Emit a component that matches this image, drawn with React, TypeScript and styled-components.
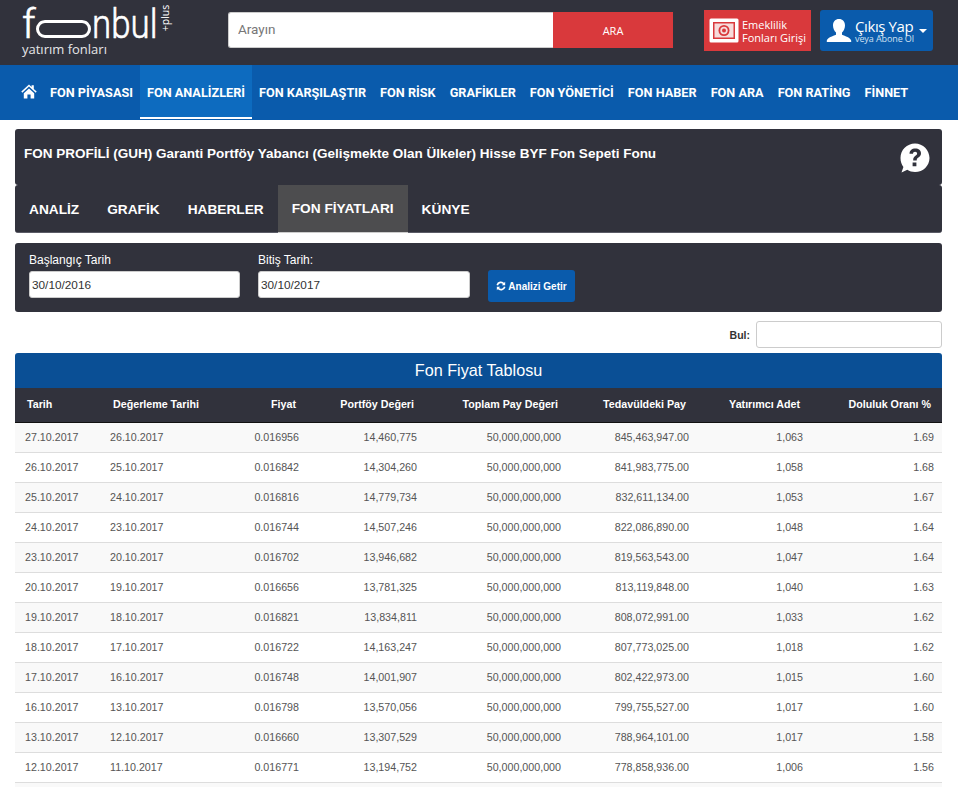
import React from 'react';
import styled, { createGlobalStyle } from 'styled-components';

const GlobalStyle = createGlobalStyle`
  html, body {
    margin: 0;
    padding: 0;
    overflow: hidden;
    height: 787px;
    background: #fff;
    font-family: "Liberation Sans", Arial, sans-serif;
    font-size: 14px;
    color: #333;
  }
  * { box-sizing: border-box; }
`;

const Header = styled.header`
  height: 65px;
  background: #31323c;
  display: flex;
  align-items: flex-start;
  padding-left: 22px;
`;

const Logo = styled.a`
  width: 206px;
  height: 65px;
  flex: none;
  position: relative;
  color: #fff;
  display: block;
`;

const LogoWord = styled.div`
  display: flex;
  align-items: baseline;
  margin-top: 6px;
  font-family: Roboto, Lato, sans-serif;
  font-weight: 300;
  font-size: 41px;
  line-height: 36px;
  -webkit-text-stroke: 0.6px #fff;
`;

const LogoPill = styled.span`
  display: block;
  flex: none;
  width: 55px;
  height: 18px;
  border: 3px solid #fff;
  border-radius: 9px;
  margin-left: 0;
`;

const LogoLetters = styled.span`
  display: inline-block;
  margin-left: 1px;
  transform: scaleX(0.85);
  transform-origin: left;
`;

const LogoSub = styled.div`
  font-family: "Open Sans", sans-serif;
  font-size: 13px;
  line-height: 14px;
  color: #e6e6e8;
`;

const LogoPlus = styled.span`
  position: absolute;
  left: 130px;
  top: 12px;
  font-family: "Open Sans", sans-serif;
  font-size: 10.5px;
  line-height: 12px;
  transform: rotate(-90deg);
`;

const SearchForm = styled.form`
  display: flex;
  width: 445px;
  height: 36px;
  margin-top: 12px;
`;

const SearchInput = styled.input`
  flex: 1;
  min-width: 0;
  border: 1px solid #ccc;
  border-right: 0;
  border-radius: 3px 0 0 3px;
  background: #fff;
  padding: 0 9px 2px;
  font-family: Roboto, sans-serif;
  font-size: 13.5px;
  &::placeholder { color: #777; opacity: 1; }
`;

const SearchButton = styled.button`
  width: 120px;
  border: 0;
  background: #d9393c;
  color: #fff;
  font-family: "Open Sans", sans-serif;
  font-size: 11px;
  font-weight: 500;
`;

const PensionLink = styled.a`
  width: 107px;
  height: 41px;
  margin: 10px 0 0 31px;
  background: #d9393c;
  color: #fff;
  display: flex;
  align-items: center;
  gap: 3px;
  padding-left: 5px;
  font-family: "Open Sans", sans-serif;
  font-size: 11px;
  font-weight: 400;
  line-height: 13px;
`;

const UserButton = styled.a`
  width: 113px;
  height: 41px;
  margin: 10px 0 0 9px;
  background: #0a5bac;
  border-radius: 3px;
  color: #fff;
  display: flex;
  align-items: center;
  padding-left: 6px;
  font-family: "Open Sans", sans-serif;
`;

const UserText = styled.div`
  margin-left: 3px;
  font-size: 15px;
  line-height: 16px;
  letter-spacing: -0.4px;
  white-space: nowrap;
  small {
    display: block;
    font-size: 9px;
    line-height: 10px;
    color: #cfe0f2;
    letter-spacing: -0.1px;
  }
`;

const Caret = styled.span`
  margin-left: 5px;
  width: 0;
  height: 0;
  border-left: 4px solid transparent;
  border-right: 4px solid transparent;
  border-top: 4px solid #fff;
`;

const Nav = styled.nav`
  height: 55px;
  background: #0a5bac;
  display: flex;
  padding-left: 21px;
`;

const HomeLink = styled.a`
  width: 22px;
  display: flex;
  align-items: center;
  padding-bottom: 2px;
`;

const NavItem = styled.a<{ $active?: boolean }>`
  display: flex;
  align-items: center;
  padding: 0 7px;
  height: 54px;
  color: #fff;
  font-family: Roboto, "Open Sans", sans-serif;
  font-size: 12.7px;
  font-weight: 700;
  white-space: nowrap;
  background: ${(p) => (p.$active ? '#0d6bbf' : 'transparent')};
  border-bottom: ${(p) => (p.$active ? '2px solid #fff' : '0')};
  padding-top: ${(p) => (p.$active ? '2px' : '0')};
`;

const Content = styled.main`
  padding: 9px 16px 0 15px;
`;

const ProfilePanel = styled.section`
  height: 104px;
  margin-bottom: 10px;
`;

const ProfileHead = styled.div`
  height: 56px;
  background: #31323c;
  border-radius: 3px;
  display: flex;
  justify-content: space-between;
  padding: 13px 11px 0 9px;
`;

const ProfileTitle = styled.h1`
  margin: 3px 0 0;
  color: #fff;
  font-size: 13.5px;
  line-height: 17px;
  font-weight: 700;
`;

const Tabs = styled.div`
  height: 48px;
  display: flex;
  background: #31323c;
  border-radius: 3px;
  border-bottom: 1px solid #5a5b66;
`;

const Tab = styled.a<{ $active?: boolean }>`
  display: flex;
  align-items: center;
  height: 48px;
  padding: 0 14px;
  color: #fff;
  font-size: 13.7px;
  font-weight: 700;
  background: ${(p) => (p.$active ? '#4d4d4f' : 'transparent')};
  border-bottom: ${(p) => (p.$active ? '1px solid #ccc' : '0')};
`;

const FilterPanel = styled.section`
  background: #31323c;
  border-radius: 3px;
  height: 69px;
  margin-bottom: 9px;
  display: flex;
  padding: 10px 14px 0;
`;

const Field = styled.div<{ $width: number }>`
  width: ${(p) => p.$width}px;
  margin-right: 18px;
`;

const FieldLabel = styled.label`
  display: block;
  color: #fff;
  font-size: 12px;
  line-height: 15px;
  margin-bottom: 3px;
`;

const DateInput = styled.input`
  display: block;
  width: 100%;
  height: 27px;
  border: 1px solid #ccc;
  border-radius: 3px;
  padding: 0 2px;
  font-family: "Liberation Sans", Arial, sans-serif;
  font-size: 11.8px;
  color: #333;
  background: #fff;
`;

const FetchButton = styled.button`
  align-self: flex-start;
  margin-top: 17px;
  height: 32px;
  width: 87px;
  border: 0;
  border-radius: 3px;
  background: #0a5bac;
  color: #fff;
  font-family: "Liberation Sans", Arial, sans-serif;
  font-size: 10px;
  font-weight: 700;
  display: flex;
  align-items: center;
  justify-content: center;
  gap: 2px;
`;

const FindRow = styled.div`
  display: flex;
  justify-content: flex-end;
  align-items: center;
  gap: 6px;
  height: 27px;
  margin-bottom: 5px;
`;

const FindLabel = styled.label`
  font-size: 10.5px;
  font-weight: 700;
  color: #333;
`;

const FindInput = styled.input`
  width: 186px;
  height: 27px;
  border: 1px solid #ccc;
  border-radius: 3px;
  background: #fff;
`;

const TableTitle = styled.h2`
  margin: 0;
  height: 35px;
  background: #0a4f95;
  border-radius: 3px 3px 0 0;
  color: #fff;
  font-size: 16.2px;
  font-weight: 400;
  line-height: 35px;
  text-align: center;
`;

const PriceTable = styled.table`
  width: 927px;
  table-layout: fixed;
  border-collapse: collapse;
`;

const HeadCell = styled.th<{ $align?: 'left' | 'right'; $inset?: number }>`
  height: 34px;
  background: #31323c;
  color: #fff;
  font-weight: 700;
  font-size: 10.7px;
  text-align: ${(p) => p.$align || 'right'};
  padding: 0 11px 2px ${(p) => p.$inset || 0}px;
  border-bottom: 1px solid #111;
  white-space: nowrap;
`;

const Row = styled.tr`
  height: 30px;
  background: #f9f9f9;
  &:nth-child(even) { background: #fff; }
  border-bottom: 1px solid #ddd;
`;

const Cell = styled.td<{ $align?: 'left' | 'right' }>`
  color: #555;
  font-size: 10.7px;
  text-align: ${(p) => p.$align || 'right'};
  padding: 0 8px 0 ${(p) => (p.$align === 'left' ? '10px' : '0')};
  white-space: nowrap;
`;

const HomeIcon = () => (
  <svg width="16" height="15" viewBox="0 0 16 15" fill="#fff">
    <path d="M8 0.5 0.3 7.6l1 1.1L8 2.6l6.7 6.1 1-1.1L12.8 5V1.2h-2.2v1.8z" />
    <path d="M2.8 9.2 8 4.4l5.2 4.8V14.5H9.6v-4H6.4v4H2.8z" />
  </svg>
);

const HelpIcon = () => (
  <svg width="32" height="32" viewBox="0 0 32 32">
    <path
      fill="#fff"
      d="M16 1.500C7.900 1.500 1.500 7.900 1.500 16c0 3.400 1 6.400 2.900 8.900L2.500 30.500l5.800-2.700c2.200 1.400 4.900 2.200 7.700 2.200 8.100 0 14.500-6.200 14.500-14S24.100 1.500 16 1.500z"
    />
    <path
      fill="#31323c"
      d="M10.500 11.800c0-3.400 2.400-5.400 5.800-5.400 3.300 0 5.700 1.900 5.700 4.800 0 2.200-1.100 3.300-2.600 4.400-1.200.9-1.700 1.400-1.700 2.800h-3.500c-.1-2.300.6-3.400 2.200-4.600 1.100-.8 1.700-1.300 1.700-2.300 0-1.100-.8-1.800-2-1.800-1.300 0-2.100.9-2.100 2.100zM13.600 20.500h3.800v3.700h-3.800z"
    />
  </svg>
);

const SafeIcon = () => (
  <svg width="30" height="25" viewBox="0 0 30 25" fill="none" style={{ flex: 'none' }}>
    <rect x="0.500" y="0.500" width="29" height="24" rx="1.500" fill="#fff" />
    <rect x="4" y="4" width="22" height="17" fill="#d9393c" />
    <rect x="5.500" y="5.500" width="19" height="14" fill="#f6dcdc" />
    <circle cx="15" cy="12.500" r="5.500" fill="#d9393c" />
    <circle cx="15" cy="12.500" r="3.700" fill="#f6dcdc" />
    <circle cx="15" cy="12.500" r="2" fill="#d9393c" />
  </svg>
);

const UserIcon = () => (
  <svg width="26" height="26" viewBox="0 0 26 26" fill="#fff" style={{ flex: 'none' }}>
    <path d="M13 1c-3.600 0-6 2.600-6 6.500 0 2.900 1.300 5.500 3 7v2.300c-3 1.400-8.700 2.600-9.300 6.200-.1.600.3 1 .9 1h22.800c.6 0 1-.4.9-1-.6-3.600-6.300-4.800-9.300-6.200v-2.300c1.700-1.500 3-4.100 3-7C19 3.600 16.600 1 13 1z" />
  </svg>
);

const RefreshIcon = () => (
  <svg width="10" height="10" viewBox="0 0 24 24" fill="none" stroke="#fff" strokeWidth="4">
    <path d="M3 10a9 9 0 0 1 16-3" />
    <path d="M21 14a9 9 0 0 1-16 3" />
    <path d="M22 2v8h-8zM2 22v-8h8z" fill="#fff" stroke="none" />
  </svg>
);

const navItems = [
  'FON PİYASASI',
  'FON ANALİZLERİ',
  'FON KARŞILAŞTIR',
  'FON RİSK',
  'GRAFİKLER',
  'FON YÖNETİCİ',
  'FON HABER',
  'FON ARA',
  'FON RATİNG',
  'FİNNET',
];

const tabs = ['ANALİZ', 'GRAFİK', 'HABERLER', 'FON FİYATLARI', 'KÜNYE'];

const columns = [
  { title: 'Tarih', width: 85, align: 'left' as const, inset: 12 },
  { title: 'Değerleme Tarihi', width: 130, align: 'left' as const, inset: 13 },
  { title: 'Fiyat', width: 77 },
  { title: 'Portföy Değeri', width: 118 },
  { title: 'Toplam Pay Değeri', width: 144 },
  { title: 'Tedavüldeki Pay', width: 128 },
  { title: 'Yatırımcı Adet', width: 114 },
  { title: 'Doluluk Oranı %', width: 131 },
];

const rows = [
  ['27.10.2017', '26.10.2017', '0.016956', '14,460,775', '845,463,947.00', '1,063', '1.69'],
  ['26.10.2017', '25.10.2017', '0.016842', '14,304,260', '841,983,775.00', '1,058', '1.68'],
  ['25.10.2017', '24.10.2017', '0.016816', '14,779,734', '832,611,134.00', '1,053', '1.67'],
  ['24.10.2017', '23.10.2017', '0.016744', '14,507,246', '822,086,890.00', '1,048', '1.64'],
  ['23.10.2017', '20.10.2017', '0.016702', '13,946,682', '819,563,543.00', '1,047', '1.64'],
  ['20.10.2017', '19.10.2017', '0.016656', '13,781,325', '813,119,848.00', '1,040', '1.63'],
  ['19.10.2017', '18.10.2017', '0.016821', '13,834,811', '808,072,991.00', '1,033', '1.62'],
  ['18.10.2017', '17.10.2017', '0.016722', '14,163,247', '807,773,025.00', '1,018', '1.62'],
  ['17.10.2017', '16.10.2017', '0.016748', '14,001,907', '802,422,973.00', '1,015', '1.60'],
  ['16.10.2017', '13.10.2017', '0.016798', '13,570,056', '799,755,527.00', '1,017', '1.60'],
  ['13.10.2017', '12.10.2017', '0.016660', '13,307,529', '788,964,101.00', '1,017', '1.58'],
  ['12.10.2017', '11.10.2017', '0.016771', '13,194,752', '778,858,936.00', '1,006', '1.56'],
];

const App: React.FC = () => {
  return (
    <>
      <GlobalStyle />
      <Header>
        <Logo>
          <LogoWord>
            f<LogoPill />
            <LogoLetters>nbul</LogoLetters>
          </LogoWord>
          <LogoSub>yatırım fonları</LogoSub>
          <LogoPlus>+plus</LogoPlus>
        </Logo>
        <SearchForm>
          <SearchInput placeholder="Arayın" />
          <SearchButton type="button">ARA</SearchButton>
        </SearchForm>
        <PensionLink>
          <SafeIcon />
          <span>
            Emeklilik
            <br />
            Fonları Girişi
          </span>
        </PensionLink>
        <UserButton>
          <UserIcon />
          <UserText>
            Çıkış Yap
            <small>veya Abone Ol</small>
          </UserText>
          <Caret />
        </UserButton>
      </Header>
      <Nav>
        <HomeLink>
          <HomeIcon />
        </HomeLink>
        {navItems.map((item) => (
          <NavItem key={item} $active={item === 'FON ANALİZLERİ'}>
            {item}
          </NavItem>
        ))}
      </Nav>
      <Content>
        <ProfilePanel>
          <ProfileHead>
            <ProfileTitle>FON PROFİLİ (GUH) Garanti Portföy Yabancı (Gelişmekte Olan Ülkeler) Hisse BYF Fon Sepeti Fonu</ProfileTitle>
            <HelpIcon />
          </ProfileHead>
          <Tabs>
            {tabs.map((tab) => (
              <Tab key={tab} $active={tab === 'FON FİYATLARI'}>
                {tab}
              </Tab>
            ))}
          </Tabs>
        </ProfilePanel>
        <FilterPanel>
          <Field $width={211}>
            <FieldLabel>Başlangıç Tarih</FieldLabel>
            <DateInput defaultValue="30/10/2016" />
          </Field>
          <Field $width={212}>
            <FieldLabel>Bitiş Tarih:</FieldLabel>
            <DateInput defaultValue="30/10/2017" />
          </Field>
          <FetchButton type="button">
            <RefreshIcon />
            Analizi Getir
          </FetchButton>
        </FilterPanel>
        <FindRow>
          <FindLabel>Bul:</FindLabel>
          <FindInput />
        </FindRow>
        <TableTitle>Fon Fiyat Tablosu</TableTitle>
        <PriceTable>
          <colgroup>
            {columns.map((c) => (
              <col key={c.title} style={{ width: c.width }} />
            ))}
          </colgroup>
          <thead>
            <tr>
              {columns.map((c) => (
                <HeadCell key={c.title} $align={c.align} $inset={c.inset}>
                  {c.title}
                </HeadCell>
              ))}
            </tr>
          </thead>
          <tbody>
            {rows.map((r) => (
              <Row key={r[0]}>
                <Cell $align="left">{r[0]}</Cell>
                <Cell $align="left">{r[1]}</Cell>
                <Cell>{r[2]}</Cell>
                <Cell>{r[3]}</Cell>
                <Cell>50,000,000,000</Cell>
                <Cell>{r[4]}</Cell>
                <Cell>{r[5]}</Cell>
                <Cell>{r[6]}</Cell>
              </Row>
            ))}
            <Row>
              <Cell colSpan={8} />
            </Row>
          </tbody>
        </PriceTable>
      </Content>
    </>
  );
};

export default App;
